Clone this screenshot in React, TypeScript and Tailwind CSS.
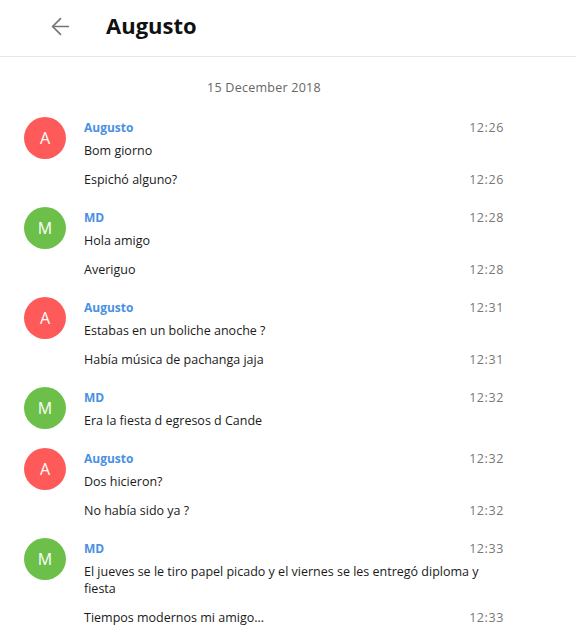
import React from "react";

type Msg = { text: string; time?: string };
type Group = { name: string; initial: string; color: string; time: string; msgs: Msg[] };

const groups: Group[] = [
  { name: "Augusto", initial: "A", color: "bg-[#ff5a5a]", time: "12:26", msgs: [{ text: "Bom giorno" }, { text: "Espichó alguno?", time: "12:26" }] },
  { name: "MD", initial: "M", color: "bg-[#6cc04a]", time: "12:28", msgs: [{ text: "Hola amigo" }, { text: "Averiguo", time: "12:28" }] },
  { name: "Augusto", initial: "A", color: "bg-[#ff5a5a]", time: "12:31", msgs: [{ text: "Estabas en un boliche anoche ?" }, { text: "Había música de pachanga jaja", time: "12:31" }] },
  { name: "MD", initial: "M", color: "bg-[#6cc04a]", time: "12:32", msgs: [{ text: "Era la fiesta d egresos d Cande" }] },
  { name: "Augusto", initial: "A", color: "bg-[#ff5a5a]", time: "12:32", msgs: [{ text: "Dos hicieron?" }, { text: "No había sido ya ?", time: "12:32" }] },
  { name: "MD", initial: "M", color: "bg-[#6cc04a]", time: "12:33", msgs: [{ text: "El jueves se le tiro papel picado y el viernes se les entregó diploma y fiesta" }, { text: "Tiempos modernos mi amigo...", time: "12:33" }] },
];

export default function App() {
  return (
    <div className="w-[576px] h-[644px] overflow-hidden bg-white text-[#1a1a1a]" style={{ fontFamily: '"Open Sans", "Noto Sans", sans-serif' }}>
      <div className="h-[57px] border-b border-[#e6e6e6] flex items-center">
        <div className="w-[106px] flex items-center pl-[47px] mt-[-4px]">
          <svg width="27" height="27" viewBox="0 0 24 24" fill="none" stroke="#757575" strokeWidth="1.5" strokeLinecap="round" strokeLinejoin="round">
            <path d="m12 19-7-7 7-7" />
            <path d="M19 12H5" />
          </svg>
        </div>
        <div className="text-[22px] font-bold leading-[28px] text-[#111] mt-[-6px]">Augusto</div>
      </div>
      <div className="w-[528px] px-6 pt-[22px]">
        <div className="text-center text-[12.5px] leading-[18px] tracking-[0.25px] text-[#666] mb-[20px]">15 December 2018</div>
        {groups.map((g, i) => (
          <div key={i} className="flex mb-[13px]">
            <div className={`w-[42px] h-[42px] rounded-full ${g.color} flex items-center justify-center text-white text-[16px] shrink-0`}>
              {g.initial}
            </div>
            <div className="ml-[18px] flex-1">
              <div className="flex justify-between pt-[2px] leading-[17px]">
                <span className="text-[12px] font-bold text-[#4a90e2]">{g.name}</span>
                <span className="text-[12.5px] tracking-[0.6px] text-[#777]">{g.time}</span>
              </div>
              {g.msgs.map((m, j) => (
                <div key={j} className="flex justify-between py-[6px] leading-[17px] text-[12.5px]">
                  <span>{m.text}</span>
                  {m.time && <span className="shrink-0 ml-4 tracking-[0.6px] text-[#777]">{m.time}</span>}
                </div>
              ))}
            </div>
          </div>
        ))}
      </div>
    </div>
  );
}
